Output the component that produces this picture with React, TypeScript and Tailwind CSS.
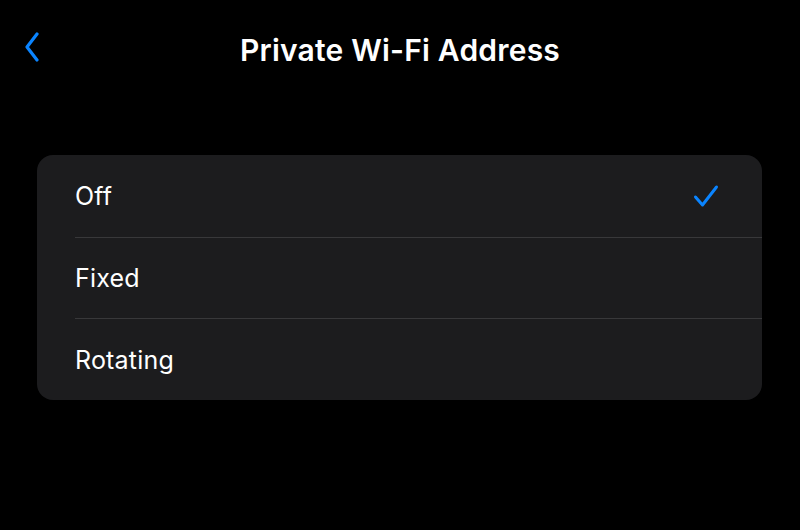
import React from "react";

export default function App() {
  const rows = [
    { label: "Off", checked: true },
    { label: "Fixed", checked: false },
    { label: "Rotating", checked: false },
  ];
  return (
    <div
      className="w-[800px] h-[530px] bg-black text-white flex flex-col"
      style={{ fontFamily: "Inter, 'Noto Sans', sans-serif" }}
    >
      <div className="relative h-[98px] flex items-center justify-center">
        <svg
          className="absolute left-[24px] top-[32px]"
          width="16"
          height="30"
          viewBox="0 0 16 30"
          fill="none"
        >
          <path
            d="M13 2 L3 15 L13 28"
            stroke="#0a84ff"
            strokeWidth="3.2"
            strokeLinecap="round"
            strokeLinejoin="round"
          />
        </svg>
        <h1 className="text-[30px] font-semibold tracking-[0.2px] mt-[2px]">
          Private Wi-Fi Address
        </h1>
      </div>
      <div className="mt-[57px] ml-[37px] w-[725px] rounded-[16px] bg-[#1c1c1e] overflow-hidden">
        {rows.map((r, i) => (
          <div key={r.label} className="pl-[38px]">
            <div
              className={
                "h-[81.5px] flex items-center justify-between pr-[43px] " +
                (i > 0 ? "border-t border-[#38383a]" : "")
              }
            >
              <span className="text-[25px] tracking-[0.2px] mt-[2px]">{r.label}</span>
              {r.checked && (
                <svg width="26" height="24" viewBox="0 0 26 24" fill="none">
                  <path
                    d="M2.5 13 L9.5 21 L23.5 3"
                    stroke="#0a84ff"
                    strokeWidth="3"
                    strokeLinecap="round"
                    strokeLinejoin="round"
                  />
                </svg>
              )}
            </div>
          </div>
        ))}
      </div>
    </div>
  );
}
